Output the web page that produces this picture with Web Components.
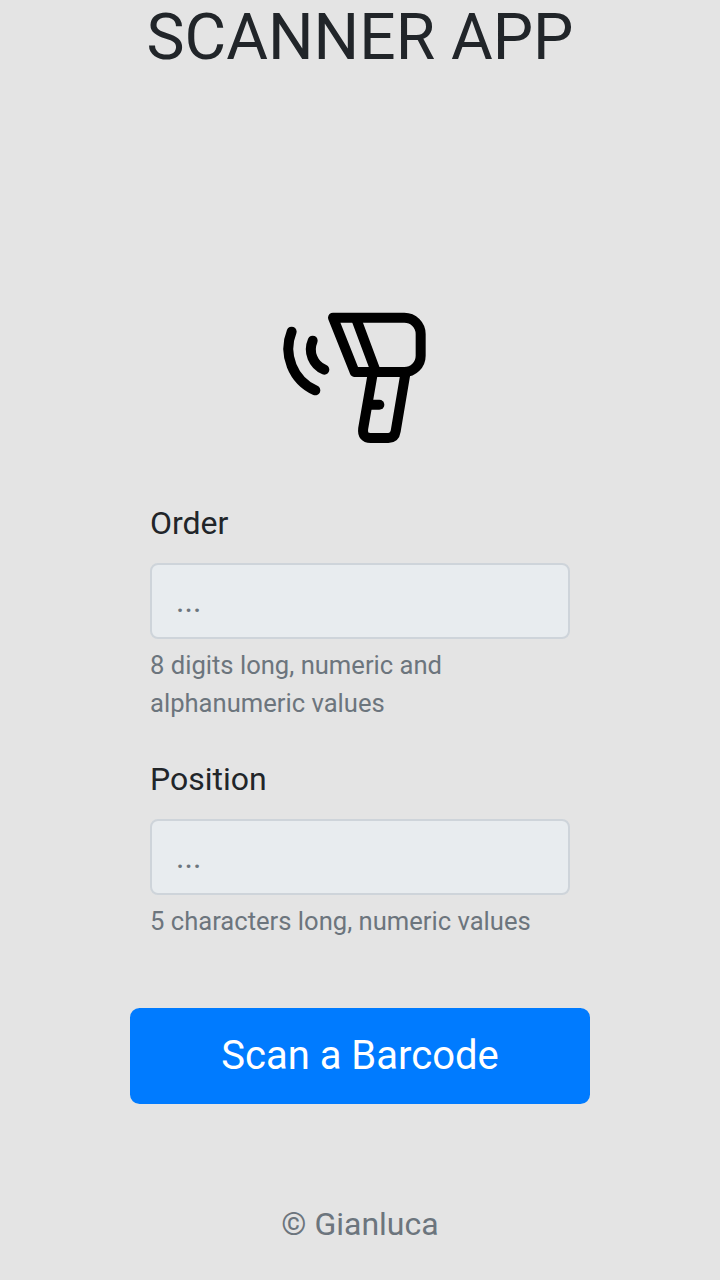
<!DOCTYPE html>
<html lang="en">
<head>
<meta charset="utf-8">
<title>Scanner App</title>
<style>
html, body { margin: 0; height: 100%; overflow: hidden; background: #e4e4e4; }
body { font: 32px/48px Roboto, sans-serif; color: #212529; }
</style>
</head>
<body>
<scanner-app>
  <span slot="title">SCANNER APP</span>
  <form-field label="Order" placeholder="...">8 digits long, numeric and alphanumeric values</form-field>
  <form-field label="Position" placeholder="...">5 characters long, numeric values</form-field>
  <primary-button slot="action">Scan a Barcode</primary-button>
  <span slot="footer">© Gianluca</span>
</scanner-app>
<script>
function define(name, html, setup) {
  customElements.define(name, class extends HTMLElement {
    constructor() {
      super();
      this.attachShadow({ mode: 'open' }).innerHTML = html;
    }
    connectedCallback() { if (setup) setup(this, this.shadowRoot); }
  });
}

define('scanner-icon', `
<style>
:host { display: block; width: 170px; height: 155px; }
svg { display: block; width: 100%; height: 100%; }
</style>
<svg viewBox="0 0 510 465" fill="none" stroke="#000" stroke-width="30" stroke-linecap="round" stroke-linejoin="round">
  <path d="M189 53H403A49 49 0 0 1 452 102V167A49 49 0 0 1 403 216H254Z"/>
  <path d="M259 58L318 216"/>
  <path d="M309 216L279.500 386Q276 414 302 414H355Q374 414 377 394L407 216"/>
  <path d="M300 314H328"/>
  <path d="M65 95A137 137 0 0 0 136 271"/>
  <path d="M128 122A66 66 0 0 0 163 209"/>
</svg>`);

define('form-field', `
<style>
:host { display: block; }
label { display: block; margin-bottom: 16px; }
input {
  display: block; box-sizing: border-box; width: 100%; height: 76px; margin: 0;
  padding: 12px 24px; border: 2px solid #ced4da; border-radius: 8px;
  background: #e8ecef; color: #495057; font: inherit; outline: 0;
}
input::placeholder { color: #6c757d; opacity: 1; }
small { display: block; margin: 7px 0 1px; font-size: 25.6px; line-height: 38px; color: #6c757d; }
</style>
<label for="field"></label>
<input id="field" type="text">
<small><slot></slot></small>`, (host, root) => {
  root.querySelector('label').textContent = host.getAttribute('label');
  root.querySelector('input').placeholder = host.getAttribute('placeholder');
});

define('primary-button', `
<style>
:host { display: block; }
button {
  display: block; width: 100%; height: 96px; margin: 0; padding: 16px 32px;
  border: 2px solid #007bff; border-radius: 9.6px; background: #007bff;
  color: #fff; font: 40px/60px Roboto, sans-serif;
}
</style>
<button type="button"><slot></slot></button>`);

define('scanner-app', `
<style>
:host { display: flex; flex-direction: column; align-items: center; height: 1280px; }
h1 { margin: 0; font-size: 64px; font-weight: 400; line-height: 75px; }
scanner-icon { margin: 225px 0 44px; align-self: center; transform: translateX(-5px); }
.fields { display: flex; flex-direction: column; gap: 32px; width: 420px; }
.action { width: 460px; margin: 67px 0 96px; }
footer { color: #6c757d; }
</style>
<h1><slot name="title"></slot></h1>
<scanner-icon></scanner-icon>
<div class="fields"><slot></slot></div>
<div class="action"><slot name="action"></slot></div>
<footer><slot name="footer"></slot></footer>`);
</script>
</body>
</html>
